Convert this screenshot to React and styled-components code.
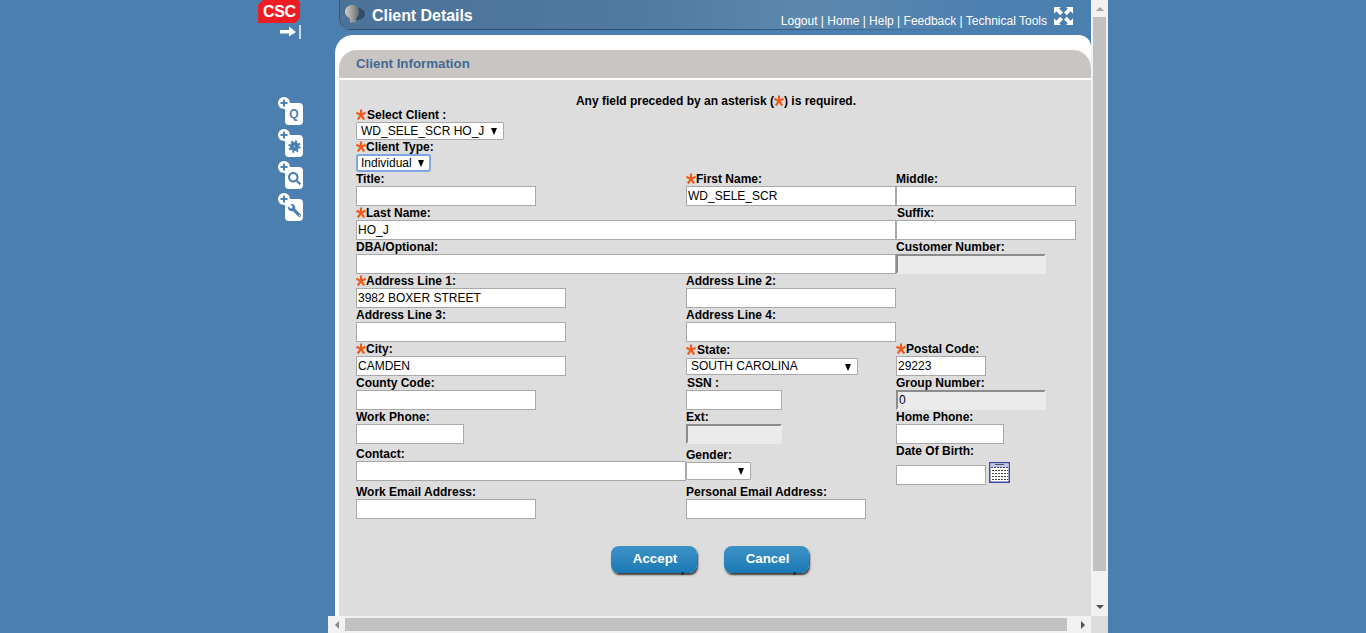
import React from "react";
import styled, { createGlobalStyle } from "styled-components";
import { FaSearch, FaWrench } from "react-icons/fa";

const Global = createGlobalStyle`
  html, body { margin: 0; padding: 0; overflow: hidden; background: #4b7fb0; }
  * { box-sizing: border-box; }
`;

const Page = styled.div`
  display: flex;
  width: 1366px;
  height: 633px;
  padding-left: 258px;
  overflow: hidden;
  background: #4b7fb0;
  font-family: "Liberation Sans", Arial, sans-serif;
  font-size: 12px;
  color: #000;
`;

const Sidebar = styled.aside`
  width: 70px;
  flex: none;
  display: flex;
  flex-direction: column;
`;

const Logo = styled.div`
  width: 42px;
  height: 23px;
  background: #ee1c25;
  clip-path: polygon(5px 0, 40px 0, 42px 2px, 42px 18px, 37px 23px, 0 23px, 0 5px);
  color: #fff;
  font-weight: 700;
  font-size: 16px;
  line-height: 24px;
  letter-spacing: -0.4px;
  padding-left: 5px;
`;

const Collapse = styled.svg`
  display: block;
  margin: 1px 0 0 22px;
`;

const Tools = styled.div`
  display: flex;
  flex-direction: column;
  gap: 10px;
  margin: 63px 0 0 27px;
`;

const Tile = styled.div`
  position: relative;
  width: 18px;
  height: 22px;
  border-radius: 4px;
  background: #fff;
  color: #4b7fb0;
  display: flex;
  align-items: center;
  justify-content: center;
  font-weight: 700;
  font-size: 12px;
`;

const PlusBadge = styled.svg`
  position: absolute;
  left: -7px;
  top: -6px;
`;

const FlippedWrench = styled(FaWrench)`
  transform: scaleX(-1);
`;

const Frame = styled.div`
  width: 780px;
  flex: none;
  display: flex;
  flex-direction: column;
`;

const TopArea = styled.div`
  height: 616px;
  display: flex;
`;

const Viewport = styled.main`
  width: 763px;
  display: flex;
  flex-direction: column;
  padding-left: 7px;
`;

const Header = styled.header`
  height: 30px;
  margin-left: 4px;
  flex: none;
  display: flex;
  align-items: flex-start;
  border-bottom-left-radius: 12px;
  border-left: 1px solid #2f5a80;
  background:
    linear-gradient(90deg, #2c4f70 0%, #2c4f70 50%, #4b7fb0 85%) bottom / 100% 1px no-repeat,
    linear-gradient(90deg, #4c7298 0%, #4f7aa2 40%, #5d88ae 62%, #4b7fb0 88%);
  color: #fff;
`;

const Bulb = styled.svg`
  flex: none;
  margin: 4px 0 0 3px;
`;

const HeaderTitle = styled.h1`
  margin: 6px 0 0 7px;
  font-size: 16px;
  line-height: 19px;
  font-weight: 700;
  letter-spacing: -0.05px;
`;

const NavLinks = styled.nav`
  margin: 14px 0 0 auto;
  font-size: 12px;
  line-height: 15px;
  white-space: nowrap;
`;

const Expand = styled.svg`
  flex: none;
  margin: 7px 18px 0 7px;
`;

const Panel = styled.div`
  margin-top: 5px;
  flex: 1;
  min-height: 0;
  background: #fff;
  border-radius: 18px 12px 0 0;
  padding: 15px 0 0 4px;
  display: flex;
  flex-direction: column;
`;

const SectionTitle = styled.h2`
  margin: 0;
  height: 28px;
  flex: none;
  padding: 6px 0 0 17px;
  background: #c9c5c3;
  border-radius: 18px 18px 0 0;
  color: #446a94;
  font-size: 13.3px;
  line-height: 15px;
  font-weight: 700;
`;

const Body = styled.section`
  margin-top: 2px;
  flex: 1;
  background: #ddd;
  padding: 15px 0 0 17px;
`;

const Notice = styled.p`
  margin: 0;
  width: 720px;
  height: 13px;
  text-align: center;
  font-weight: 700;
  line-height: 13px;
`;

const Star = styled.svg`
  display: inline-block;
  vertical-align: -1px;
  margin-right: ${(p) => p.$gap || 0}px;
`;

const Stack = styled.div`
  display: flex;
  flex-direction: column;
`;

const Row = styled.div`
  display: grid;
  grid-template-columns: 330px 210px 180px;
  height: ${(p) => p.$h || 34}px;
`;

const Cell = styled.div`
  display: flex;
  flex-direction: column;
  align-items: flex-start;
  grid-column: ${(p) => p.$col || "auto"};
  padding-top: ${(p) => p.$top || 0}px;
`;

const Label = styled.label`
  display: block;
  height: ${(p) => p.$h || 14}px;
  line-height: 14px;
  font-weight: 700;
  padding-left: ${(p) => p.$indent || 0}px;
  white-space: nowrap;
`;

const Input = styled.input`
  display: block;
  width: ${(p) => p.$w}px;
  height: 20px;
  padding: 1px 1px;
  margin: 0;
  border: 1px solid #a9a9a9;
  background: #fff;
  font: 12px "Liberation Sans", Arial, sans-serif;
  color: #000;
  outline: none;
  &:disabled {
    background: #ebebeb;
    border-style: solid;
    border-width: 2px;
    border-color: #8c8c8c #ebebeb #ebebeb #8c8c8c;
    padding: 0 1px;
    color: #000;
    opacity: 1;
  }
`;

const SelectWrap = styled.div`
  position: relative;
  width: ${(p) => p.$w}px;
  height: ${(p) => p.$h || 18}px;
  &::after {
    content: "";
    position: absolute;
    right: ${(p) => p.$arrow || 7}px;
    top: 50%;
    margin-top: -3px;
    border-left: 3.5px solid transparent;
    border-right: 3.5px solid transparent;
    border-top: 7px solid #000;
    pointer-events: none;
  }
`;

const Select = styled.select`
  appearance: none;
  display: block;
  width: 100%;
  height: 100%;
  margin: 0;
  padding: 0 0 ${(p) => p.$lift || 0}px ${(p) => (p.$focus ? 3 : 4)}px;
  background: #fff;
  border: ${(p) => (p.$focus ? "2px solid #7fa6e2" : "1px solid #a9a9a9")};
  border-radius: ${(p) => (p.$focus ? 3 : 1)}px;
  font: 12px "Liberation Sans", Arial, sans-serif;
  color: #000;
  outline: none;
`;

const DateRow = styled.div`
  display: flex;
  align-items: flex-start;
  gap: 3px;
  margin-top: 4px;
`;

const DateInput = styled(Input)`
  margin-top: 3px;
`;

const Buttons = styled.div`
  display: flex;
  gap: 27px;
  margin: 27px 0 0 255px;
`;

const ActionButton = styled.button`
  position: relative;
  width: ${(p) => p.$w}px;
  height: 27px;
  padding: 0 0 3px 2px;
  border: 0;
  border-radius: 8px;
  background: linear-gradient(180deg, #3c92c6 0%, #2a84bc 60%, #1878b6 100%);
  box-shadow: 1px 2px 2px #3a3a3a;
  color: #fff;
  font: 700 13.33px "Liberation Sans", Arial, sans-serif;
  &::after {
    content: "";
    position: absolute;
    right: 13px;
    bottom: -2px;
    width: 3px;
    height: 3px;
    background: #333;
  }
`;

const VScroll = styled.div`
  width: 17px;
  flex: none;
  background: #f1f1f1;
  display: flex;
  flex-direction: column;
  align-items: center;
`;

const VThumb = styled.div`
  width: 13px;
  height: 554px;
  background: #c1c1c1;
`;

const Tri = styled.span`
  width: 0;
  height: 0;
  flex: none;
  ${(p) =>
    p.$dir === "up"
      ? `border-left:4px solid transparent;border-right:4px solid transparent;border-bottom:4px solid ${p.$c};`
      : p.$dir === "down"
      ? `border-left:4px solid transparent;border-right:4px solid transparent;border-top:4px solid ${p.$c};`
      : p.$dir === "left"
      ? `border-top:4px solid transparent;border-bottom:4px solid transparent;border-right:4px solid ${p.$c};`
      : `border-top:4px solid transparent;border-bottom:4px solid transparent;border-left:4px solid ${p.$c};`}
`;

const VSlot = styled.div`
  height: ${(p) => p.$h}px;
  display: flex;
  align-items: ${(p) => (p.$end ? "flex-end" : "center")};
  justify-content: center;
  padding-bottom: ${(p) => (p.$end ? 7 : 0)}px;
  flex: none;
`;

const BottomArea = styled.div`
  height: 17px;
  display: flex;
`;

const HScroll = styled.div`
  width: 763px;
  background: #f1f1f1;
  display: flex;
  align-items: center;
`;

const HSlot = styled.div`
  width: 17px;
  flex: none;
  display: flex;
  justify-content: center;
`;

const HThumb = styled.div`
  width: 722px;
  height: 13px;
  background: #c1c1c1;
  margin: 0 7px 0 0;
`;

const Corner = styled.div`
  width: 17px;
  background: #ddd;
`;

const Asterisk = ({ gap }) => (
  <Star $gap={gap} width="10" height="11" viewBox="0 0 11 11">
    <g stroke="#f05a1a" strokeWidth="2.4" fill="none">
      <path d="M5.5 0V6" />
      <path d="M0.4 3.6L5.5 6L10.6 3.6" />
      <path d="M2 11L5.5 6L9 11" />
    </g>
  </Star>
);

const Field = ({ label, req, w, value = "", disabled, indent, star = 0, col }) => (
  <Cell $col={col}>
    <Label $indent={indent}>
      {req && <Asterisk gap={star} />}
      {label}
    </Label>
    <Input $w={w} defaultValue={value} disabled={disabled} />
  </Cell>
);

const PlusIcon = () => (
  <PlusBadge width="12" height="12" viewBox="0 0 12 12">
    <circle cx="6" cy="6" r="6" fill="#fff" />
    <path d="M6 2.5V9.5M2.5 6H9.5" stroke="#4b7fb0" strokeWidth="2" />
  </PlusBadge>
);

const ToolTile = ({ children }) => (
  <Tile>
    <PlusIcon />
    {children}
  </Tile>
);

const GearIcon = () => (
  <svg width="13" height="13" viewBox="0 0 13 13">
    <circle cx="6.5" cy="6.5" r="4.6" fill="#4b7fb0" />
    <circle cx="6.5" cy="6.5" r="5.2" fill="none" stroke="#4b7fb0" strokeWidth="2" strokeDasharray="2 2.08" />
    <circle cx="6.5" cy="6.5" r="1" fill="#8aaccc" />
  </svg>
);

const CalendarIcon = () => (
  <svg width="21" height="21" viewBox="0 0 21 21">
    <rect x="0.75" y="0.75" width="19.5" height="19.5" fill="#fff" stroke="#3c4a9c" strokeWidth="1.5" />
    <rect x="1.5" y="1.5" width="18" height="4" fill="#c0c4ec" />
    <path d="M6 2.5H15" stroke="#555" />
    <path d="M2 5.5H19" stroke="#444" strokeDasharray="2 1" />
    {[8, 11, 14, 17].map((y) => (
      <path key={y} d={`M3 ${y + 0.5}H19`} stroke="#444" strokeDasharray="2 1" />
    ))}
  </svg>
);

const ExpandIcon = () => (
  <Expand width="19" height="18" viewBox="0 0 19 18">
    <g fill="#fff" stroke="none">
      <path d="M0 0H7L5.2 1.8L9 5.6L6.2 8.2L2.4 4.2L0 6.8Z" />
      <path d="M19 0H12L13.8 1.8L10 5.6L12.8 8.2L16.6 4.2L19 6.8Z" />
      <path d="M0 18H7L5.2 16.2L9 12.4L6.2 9.8L2.4 13.8L0 11.2Z" />
      <path d="M19 18H12L13.8 16.2L10 12.4L12.8 9.8L16.6 13.8L19 11.2Z" />
    </g>
  </Expand>
);

export default function App() {
  return (
    <Page>
      <Global />
      <Sidebar>
        <Logo>CSC</Logo>
        <Collapse width="21" height="16" viewBox="0 0 21 16">
          <path d="M0 6H9V2.5L16 8L9 12.5V9.5H0Z" fill="#fff" />
          <path d="M20 1V15" stroke="#fff" strokeWidth="1.4" />
        </Collapse>
        <Tools>
          <ToolTile>Q</ToolTile>
          <ToolTile><GearIcon /></ToolTile>
          <ToolTile><FaSearch size={13} /></ToolTile>
          <ToolTile><FlippedWrench size={13} /></ToolTile>
        </Tools>
      </Sidebar>
      <Frame>
        <TopArea>
          <Viewport>
            <Header>
              <Bulb width="22" height="20" viewBox="0 0 22 20">
                <defs>
                  <linearGradient id="bulb" x1="0" y1="0" x2="1" y2="0">
                    <stop offset="0" stopColor="#d0d0d0" />
                    <stop offset="1" stopColor="#6a6a6a" />
                  </linearGradient>
                </defs>
                <ellipse cx="15" cy="10" rx="7" ry="6" fill="#2f4d6b" />
                <path d="M9 1C13 1 16 4 16 8C16 11 14 13 13 15V18.5H7V15C5 13 2 11 2 8C2 4 5 1 9 1Z" fill="url(#bulb)" />
              </Bulb>
              <HeaderTitle>Client Details</HeaderTitle>
              <NavLinks>Logout | Home | Help | Feedback | Technical Tools</NavLinks>
              <ExpandIcon />
            </Header>
            <Panel>
              <SectionTitle>Client Information</SectionTitle>
              <Body>
                <Notice>
                  Any field preceded by an asterisk (<Asterisk />) is required.
                </Notice>
                <Stack>
                  <Label>
                    <Asterisk gap={1} />
                    Select Client :
                  </Label>
                  <SelectWrap $w={148}>
                    <Select defaultValue="a">
                      <option value="a">WD_SELE_SCR HO_J</option>
                    </Select>
                  </SelectWrap>
                  <Label>
                    <Asterisk />
                    Client Type:
                  </Label>
                  <SelectWrap $w={75}>
                    <Select $focus defaultValue="a">
                      <option value="a">Individual</option>
                    </Select>
                  </SelectWrap>
                </Stack>
                <Row>
                  <Field label="Title:" w={180} />
                  <Field label="First Name:" req w={210} value="WD_SELE_SCR" />
                  <Field label="Middle:" w={180} />
                </Row>
                <Row>
                  <Field label="Last Name:" req w={540} value="HO_J" col="1 / 3" />
                  <Field label="Suffix:" w={180} indent={1} />
                </Row>
                <Row>
                  <Field label="DBA/Optional:" w={540} col="1 / 3" />
                  <Field label="Customer Number:" w={150} disabled />
                </Row>
                <Row>
                  <Field label="Address Line 1:" req w={210} value="3982 BOXER STREET" />
                  <Field label="Address Line 2:" w={210} />
                </Row>
                <Row>
                  <Field label="Address Line 3:" w={210} />
                  <Field label="Address Line 4:" w={210} />
                </Row>
                <Row>
                  <Field label="City:" req w={210} value="CAMDEN" />
                  <Cell $top={1}>
                    <Label $h={15}>
                      <Asterisk gap={1} />
                      State:
                    </Label>
                    <SelectWrap $w={172} $h={17}>
                      <Select $lift={2} defaultValue="sc">
                        <option value="sc">SOUTH CAROLINA</option>
                      </Select>
                    </SelectWrap>
                  </Cell>
                  <Field label="Postal Code:" req w={90} value="29223" />
                </Row>
                <Row>
                  <Field label="County Code:" w={180} />
                  <Field label="SSN :" w={96} indent={1} />
                  <Field label="Group Number:" w={150} value="0" disabled />
                </Row>
                <Row>
                  <Field label="Work Phone:" w={108} />
                  <Field label="Ext:" w={96} disabled />
                  <Field label="Home Phone:" w={108} />
                </Row>
                <Row $h={41}>
                  <Cell $top={3}>
                    <Label>Contact:</Label>
                    <Input $w={330} />
                  </Cell>
                  <Cell $top={4}>
                    <Label>Gender:</Label>
                    <SelectWrap $w={65}>
                      <Select defaultValue="">
                        <option value=""></option>
                      </Select>
                    </SelectWrap>
                  </Cell>
                  <Cell>
                    <Label>Date Of Birth:</Label>
                    <DateRow>
                      <DateInput $w={90} />
                      <CalendarIcon />
                    </DateRow>
                  </Cell>
                </Row>
                <Row>
                  <Field label="Work Email Address:" w={180} />
                  <Field label="Personal Email Address:" w={180} />
                </Row>
                <Buttons>
                  <ActionButton $w={86}>Accept</ActionButton>
                  <ActionButton $w={85}>Cancel</ActionButton>
                </Buttons>
              </Body>
            </Panel>
          </Viewport>
          <VScroll>
            <VSlot $h={17}><Tri $dir="up" $c="#a3a3a3" /></VSlot>
            <VThumb />
            <VSlot $h={45} $end><Tri $dir="down" $c="#505050" /></VSlot>
          </VScroll>
        </TopArea>
        <BottomArea>
          <HScroll>
            <HSlot><Tri $dir="left" $c="#8a8a8a" /></HSlot>
            <HThumb />
            <HSlot><Tri $dir="right" $c="#505050" /></HSlot>
          </HScroll>
          <Corner />
        </BottomArea>
      </Frame>
    </Page>
  );
}
